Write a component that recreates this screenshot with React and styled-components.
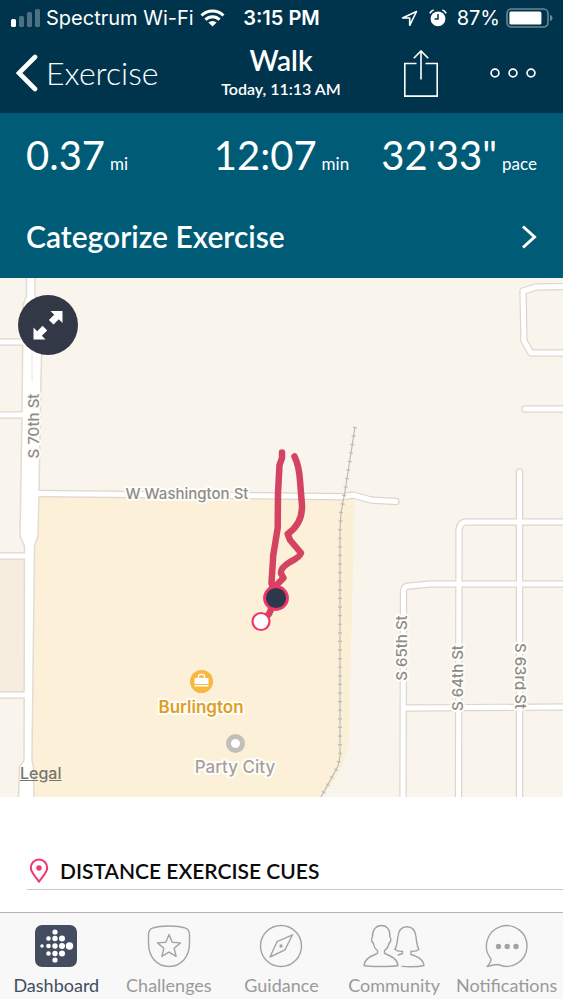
import styled, { createGlobalStyle } from 'styled-components';

const GlobalStyle = createGlobalStyle`
  *, *::before, *::after {
    box-sizing: border-box;
  }
  body {
    margin: 0;
    background: #fff;
    font-family: Lato, 'Liberation Sans', sans-serif;
  }
  button {
    margin: 0;
    padding: 0;
    border: 0;
    background: none;
    color: inherit;
    font: inherit;
    cursor: pointer;
  }
  svg {
    display: block;
    flex: none;
  }
`;

const Page = styled.div`
  display: flex;
  flex-direction: column;
  min-height: 100vh;
`;

const Header = styled.header`
  background: #00344c;
  color: #fff;
`;

const StatusBar = styled.div`
  display: grid;
  grid-template-columns: 1fr auto 1fr;
  align-items: center;
  height: 36px;
  padding: 0 10px;
  font-family: Inter, sans-serif;
  font-size: 20px;
`;

const StatusGroup = styled.div`
  display: flex;
  align-items: center;
  justify-content: ${({ $end }) => ($end ? 'flex-end' : 'flex-start')};
  gap: 6px;
  white-space: nowrap;
`;

const StatusIcons = styled.div`
  display: flex;
  align-items: center;
  gap: 11px;
  margin-right: 4px;
`;

const Clock = styled.time`
  font-weight: 600;
`;

const NavBar = styled.nav`
  display: grid;
  grid-template-columns: 1fr auto 1fr;
  align-items: center;
  height: 77px;
  padding: 0 27px 4px 16px;
`;

const BackButton = styled.button`
  display: flex;
  align-items: center;
  justify-self: start;
  gap: 8px;
  font-size: 32px;
  font-weight: 300;
`;

const TitleBlock = styled.div`
  padding-left: 10px;
  text-align: center;
`;

const Title = styled.h1`
  margin: 0;
  font-size: 28px;
  font-weight: 600;
  line-height: 32px;
`;

const Subtitle = styled.p`
  margin: 0;
  font-size: 16px;
  font-weight: 600;
  line-height: 26px;
`;

const Actions = styled.div`
  display: flex;
  align-items: center;
  justify-content: flex-end;
  gap: 52px;
`;

const Summary = styled.section`
  padding: 18px 26px 24px;
  background: #005b77;
  color: #fff;
`;

const Stats = styled.dl`
  display: grid;
  grid-template-columns: repeat(3, 1fr);
  margin: 0 0 40px;
`;

const Stat = styled.div`
  display: flex;
  flex-direction: row-reverse;
  align-items: baseline;
  justify-content: ${({ $align }) => $align};
  gap: 5px;
  white-space: nowrap;
`;

const Value = styled.dd`
  margin: 0;
  font-size: 40px;
  line-height: 48px;
`;

const Unit = styled.dt`
  font-size: 17px;
`;

const CategorizeButton = styled.button`
  display: flex;
  align-items: center;
  justify-content: space-between;
  width: 100%;
  font-size: 30px;
  font-weight: 600;
  line-height: 35px;
`;

const MapPanel = styled.section`
  position: relative;
`;

const MapDrawing = styled.svg`
  width: 100%;
  height: auto;
`;

const MapLabel = styled.text`
  fill: ${({ $color }) => $color || '#8e8c8b'};
  stroke: #fffdf8;
  stroke-width: 4px;
  stroke-linejoin: round;
  paint-order: stroke;
  font-family: Inter, sans-serif;
  font-size: ${({ $place }) => ($place ? '17px' : '15px')};
  font-weight: ${({ $bold }) => ($bold ? 600 : 500)};
  text-anchor: middle;
`;

const ExpandButton = styled.button`
  position: absolute;
  top: 17px;
  left: 18px;
  display: flex;
  align-items: center;
  justify-content: center;
  width: 60px;
  height: 60px;
  border-radius: 50%;
  background: #323845;
`;

const LegalLink = styled.a`
  position: absolute;
  bottom: 14px;
  left: 20px;
  color: #77756d;
  font-family: Inter, sans-serif;
  font-size: 16px;
  font-weight: 500;
  line-height: 20px;
`;

const Cues = styled.section`
  flex: 1;
  padding: 58px 0 22px 27px;
`;

const CuesTitle = styled.h2`
  display: flex;
  align-items: center;
  gap: 11px;
  margin: 0;
  padding: 0 0 2px 2px;
  border-bottom: 1px solid #c9c9c9;
  color: #0b0b0b;
  font-size: 21px;
  font-weight: 600;
  line-height: 32px;
`;

const TabBar = styled.nav`
  display: grid;
  grid-template-columns: repeat(5, 1fr);
  height: 87px;
  border-top: 1px solid #b5b5b5;
  background: #f8f8f8;
`;

const Tab = styled.a`
  display: flex;
  flex-direction: column;
  align-items: center;
  gap: 4px;
  padding-top: 11px;
  color: ${({ $active }) => ($active ? '#434d5f' : '#9a9a9a')};
  font-size: 18px;
  line-height: 26px;
  text-decoration: none;
  white-space: nowrap;
`;

const SignalIcon = () => (
  <svg width="30" height="18" viewBox="0 0 30 18" fill="#fff">
    <rect x="1" y="10" width="5" height="8" rx="1.5" />
    <g opacity=".3">
      <rect x="9" y="7" width="5" height="11" rx="1.5" />
      <rect x="17" y="3" width="5" height="15" rx="1.5" />
      <rect x="25" y="0" width="5" height="18" rx="1.5" />
    </g>
  </svg>
);

const WifiIcon = () => (
  <svg width="25" height="18" viewBox="0 0 25 18" fill="none">
    <path d="M1.5 6.5a15.6 15.6 0 0 1 22 0" stroke="#fff" strokeWidth="3" />
    <path d="M5.4 10.6a10 10 0 0 1 14.2 0" stroke="#fff" strokeWidth="3" />
    <path d="M12.5 17.6 8.4 13.6a5.8 5.8 0 0 1 8.2 0z" fill="#fff" />
  </svg>
);

const LocationIcon = () => (
  <svg width="17" height="17" viewBox="0 0 17 17" fill="none">
    <path
      d="M15.5 1.5 1.5 8h7.2v7.3z"
      stroke="#fff"
      strokeWidth="1.6"
      strokeLinejoin="round"
    />
  </svg>
);

const AlarmIcon = () => (
  <svg width="18" height="18" viewBox="0 0 18 18">
    <circle cx="9" cy="9.8" r="7.4" fill="#fff" />
    <path
      d="M.9 4.4A6 6 0 0 1 4.6 1M17.1 4.4A6 6 0 0 0 13.4 1"
      fill="none"
      stroke="#fff"
      strokeWidth="1.8"
    />
    <path d="M9 5v5H5.6" fill="none" stroke="#00344c" strokeWidth="1.5" />
  </svg>
);

const BatteryIcon = () => (
  <svg width="47" height="20" viewBox="0 0 47 20">
    <rect
      x="1"
      y="1"
      width="41"
      height="18"
      rx="4.5"
      fill="none"
      stroke="#6b8796"
      strokeWidth="1.6"
    />
    <rect x="3.4" y="3.4" width="32" height="13.2" rx="1.5" fill="#fff" />
    <path d="M44 6.8q2.6 1 2.6 3.2T44 13.2z" fill="#6b8796" />
  </svg>
);

const BackIcon = () => (
  <svg width="22" height="38" viewBox="0 0 22 38" fill="none">
    <path
      d="M19 3 3 19l16 16"
      stroke="#fff"
      strokeWidth="4.6"
      strokeLinecap="round"
    />
  </svg>
);

const ShareIcon = () => (
  <svg width="34" height="48" viewBox="0 0 34 48" fill="none">
    <path
      d="M12.5 14.5H.8v32.6h32.4V14.5H21.5M17 30.5V2M9.8 9.3 17 2l7.2 7.3"
      stroke="#fff"
      strokeWidth="1.6"
    />
  </svg>
);

const MoreIcon = () => (
  <svg width="46" height="12" viewBox="0 0 46 12" fill="none">
    {[5, 23, 41].map((cx) => (
      <circle key={cx} cx={cx} cy="6" r="3.9" stroke="#fff" strokeWidth="1.7" />
    ))}
  </svg>
);

const ExpandIcon = () => (
  <svg width="30" height="30" viewBox="0 0 30 30" fill="#fff">
    <path d="M17.5 1h12v12l-3.7-3.7-5.3 5.3-4.6-4.6L21.2 4.7z" />
    <path d="M12.5 29.5H.5v-12l3.7 3.7 5.4-5.4 4.6 4.6-5.4 5.4z" />
  </svg>
);

const PinIcon = () => (
  <svg width="20" height="26" viewBox="0 0 20 26" fill="none">
    <path
      d="M10 23.8C7 19 1.8 14.6 1.8 9.8a8.2 8.2 0 0 1 16.4 0c0 4.8-5.2 9.2-8.2 14z"
      stroke="#f0386d"
      strokeWidth="2"
      strokeLinejoin="round"
    />
    <circle cx="10" cy="10" r="2.7" fill="#f0386d" />
  </svg>
);

const dots = [
  [8, 22, 1.7],
  [14.5, 14.5, 2.3],
  [14.5, 22, 2.3],
  [14.5, 29.5, 2.3],
  [21, 8, 2.6],
  [21, 14.5, 2.7],
  [21, 22, 2.7],
  [21, 29.5, 2.7],
  [21, 36, 2.6],
  [28, 14.5, 3],
  [28, 22, 3],
  [28, 29.5, 3],
  [35.5, 22, 3.7],
];

const DashboardIcon = () => (
  <svg width="44" height="44" viewBox="0 0 44 44">
    <rect x="1" y="1" width="42" height="42" rx="7" fill="#434d5f" />
    {dots.map(([cx, cy, r]) => (
      <circle key={`${cx}-${cy}`} cx={cx} cy={cy} r={r} fill="#fff" />
    ))}
  </svg>
);

const LineIcon = ({ width = 44, children }) => (
  <svg
    width={width}
    height="44"
    viewBox={`0 0 ${width} 44`}
    fill="none"
    stroke="#a3a3a3"
    strokeWidth="1.4"
    strokeLinejoin="round"
    strokeLinecap="round"
  >
    {children}
  </svg>
);

const ChallengesIcon = () => (
  <LineIcon>
    <path d="M22 2C15.5 2 9.5 2.7 5.5 4.2 2.5 5.3 1.5 7.5 1.5 11v8C1.5 33 10 42.5 22 42.5S42.5 33 42.5 19v-8c0-3.5-1-5.7-4-6.8C34.500 2.7 28.5 2 22 2z" />
    <path d="m22 10.5 3.2 7.7 8.3.7-6.300 5.400 1.900 8.100-7.100-4.300-7.100 4.300 1.900-8.100-6.300-5.400 8.300-.7z" />
  </LineIcon>
);

const GuidanceIcon = () => (
  <LineIcon>
    <circle cx="22" cy="22" r="20.5" />
    <path d="M33.5 10.8 18 17.7 11 33l15-7.2z" />
    <circle cx="22" cy="22" r="1" fill="#a3a3a3" />
  </LineIcon>
);

const CommunityIcon = () => (
  <LineIcon width={62}>
    <path d="M14.5 26.5v2.8C9 32 2 33.8 1 41.5c5 1.3 29 1.3 34 0-1-7.7-8-9.5-13.5-12.2v-2.8c2.6-1.6 4-4.5 4.6-7.5 2-.8 2.3-5 .8-6C27.5 6 24 1.5 18.5 1.500S9 6 9.500 13c-1.500 1-1.200 5.200.8 6 .5 3 1.800 5.900 4.200 7.500z" />
    <path d="M39 42.4c7 .5 17 .3 22-.9-1.200-7-7-9-13-11v-3.200c3.600.3 6.400-.5 8-2-2.200-3-2.400-7.300-2.900-12C52.400 6.500 49.500 2.700 44 2.700S35.400 6.500 34.800 13.300c-.5 4.700-.8 9-3 12 1.700 1.500 4.400 2.300 7.700 2v2.200L35.300 31" />
  </LineIcon>
);

const NotificationsIcon = () => (
  <LineIcon>
    <path d="M2.2 42.5c3-3.4 4-5.700 3.700-7.800a20.300 20.300 0 1 1 7.500 5.800C9.500 40.500 6 41.300 2.200 42.500z" />
    <g fill="#a3a3a3">
      <circle cx="13.5" cy="22.5" r="2" />
      <circle cx="22.2" cy="22.5" r="2" />
      <circle cx="31" cy="22.5" r="2" />
    </g>
  </LineIcon>
);

const roads = [
  'M-5 64H25',
  'M-5 137H23',
  'M-5 278H27',
  'M-5 417H26',
  'M36 215.5 281 218l62 .7 10-1.700 18 5 25 1.500',
  'M570 8.5 536 9l-13 4 1 50 7 12h39',
  'M525 131h45',
  'M519.5 194V525',
  'M570 244H466q-6 0-7 8L458.500 525',
  'M570 306H430L409 308q-5 0-5.500 5L403 525',
  'M405 430 570 429',
];

const rail = 'M355 149 345 213l-4 22-1 18V478l-2 10-17 31';

const StreetMap = () => (
  <MapDrawing viewBox="0 0 563 519" role="img" aria-label="Walk route">
    <rect width="563" height="519" fill="#f9f4ec" />
    <path d="M0 280H26V415H0z" fill="#f6eddf" />
    <path
      d="M35 218 354 220 353 290 350 400 349 460Q347 488 322 519H30z"
      fill="#fcf1d8"
    />
    <path
      d="M340 253 343 222 354 220 353 290 350 400 349 460Q347 488 322 519L338 488 340 478z"
      fill="#fbefd6"
    />
    <g fill="none" strokeLinecap="round" strokeLinejoin="round">
      {roads.map((d) => (
        <path key={d} d={d} stroke="#ddd6cc" strokeWidth="7.4" />
      ))}
      <path
        d="M26.5-2V18L23 27 22 140 20 258 24.5 268 24 482 19.5 489 18.5 521H34L33.5 489 32 482 34.5 268 38 258 39 215 41 100 42 60 42 27 35 18V-2z"
        fill="#fff"
        stroke="#e2dcd3"
        strokeWidth="1.5"
      />
      {roads.map((d) => (
        <path key={d} d={d} stroke="#fff" strokeWidth="5" />
      ))}
      <path d="M32 76V103" stroke="#ece6de" strokeWidth="1" />
    </g>
    <g fill="none">
      <path d={rail} stroke="#bdbbb8" strokeWidth="1.2" />
      <path
        d={rail}
        stroke="#bdbbb8"
        strokeWidth="4"
        strokeDasharray="1.2 7.4"
      />
    </g>
    <g
      fill="none"
      stroke="#d44462"
      strokeWidth="6.5"
      strokeLinecap="round"
      strokeLinejoin="round"
    >
      <path d="M282 174.5V180l-2.500 7L278 215l-.3 35-4.400 27-1.800 28 3 12" />
      <path d="M294.5 178.5q4.500 9 5.500 24l2 25q.5 18-14.300 28.500l2.300 6 11 13q-1 4-11 9-10 6-9 11.500l2.500 4.500-8 8" />
      <path d="M276 320 269 336 263 342" />
    </g>
    <circle cx="276" cy="320" r="11.5" fill="#2d394a" stroke="#f0356b" strokeWidth="2.8" />
    <circle cx="261" cy="343.5" r="8.5" fill="#fff" stroke="#f0356b" strokeWidth="2.2" />

    <MapLabel transform="translate(39 148) rotate(-90)">S 70th St</MapLabel>
    <MapLabel x="187" y="221">W Washington St</MapLabel>
    <MapLabel transform="translate(407 370) rotate(-90)">S 65th St</MapLabel>
    <MapLabel transform="translate(463 400) rotate(-90)">S 64th St</MapLabel>
    <MapLabel transform="translate(515 398) rotate(90)">S 63rd St</MapLabel>

    <circle cx="201.5" cy="403.5" r="11.5" fill="#f8b840" />
    <path d="M194.5 400h14v6h-14zM194.5 407h14v1.600h-14z" fill="#fff" />
    <path
      d="M198.5 400v-1.500q0-2 2-2h2q2 0 2 2v1.500"
      fill="none"
      stroke="#fff"
      strokeWidth="1.3"
    />
    <MapLabel $place $bold $color="#df9e23" x="201" y="435">
      Burlington
    </MapLabel>
    <circle cx="235.5" cy="465.5" r="7" fill="#fff" stroke="#c2beb9" strokeWidth="5" />
    <MapLabel $place $color="#a5a19c" x="235" y="495">
      Party City
    </MapLabel>
  </MapDrawing>
);

const stats = [
  { value: '0.37', unit: 'mi', align: 'flex-end' },
  { value: '12:07', unit: 'min', align: 'center' },
  { value: '32\'33"', unit: 'pace', align: 'flex-start' },
];

const tabs = [
  { label: 'Dashboard', Icon: DashboardIcon, active: true },
  { label: 'Challenges', Icon: ChallengesIcon },
  { label: 'Guidance', Icon: GuidanceIcon },
  { label: 'Community', Icon: CommunityIcon },
  { label: 'Notifications', Icon: NotificationsIcon },
];

const App = () => (
  <Page>
    <GlobalStyle />
    <Header>
      <StatusBar>
        <StatusGroup>
          <SignalIcon />
          <span>Spectrum Wi-Fi</span>
          <WifiIcon />
        </StatusGroup>
        <Clock>3:15 PM</Clock>
        <StatusGroup $end>
          <StatusIcons>
            <LocationIcon />
            <AlarmIcon />
          </StatusIcons>
          <span>87%</span>
          <BatteryIcon />
        </StatusGroup>
      </StatusBar>
      <NavBar>
        <BackButton type="button">
          <BackIcon />
          Exercise
        </BackButton>
        <TitleBlock>
          <Title>Walk</Title>
          <Subtitle>Today, 11:13 AM</Subtitle>
        </TitleBlock>
        <Actions>
          <button type="button" aria-label="Share">
            <ShareIcon />
          </button>
          <button type="button" aria-label="More">
            <MoreIcon />
          </button>
        </Actions>
      </NavBar>
    </Header>
    <Summary>
      <Stats>
        {stats.map(({ value, unit, align }) => (
          <Stat key={unit} $align={align}>
            <Unit>{unit}</Unit>
            <Value>{value}</Value>
          </Stat>
        ))}
      </Stats>
      <CategorizeButton type="button">
        Categorize Exercise
        <svg width="16" height="24" viewBox="0 0 16 24" fill="none">
          <path d="M2 1.5 13.5 12 2 22.5" stroke="#fff" strokeWidth="3" />
        </svg>
      </CategorizeButton>
    </Summary>
    <MapPanel>
      <StreetMap />
      <ExpandButton type="button" aria-label="Expand map">
        <ExpandIcon />
      </ExpandButton>
      <LegalLink href="#legal">Legal</LegalLink>
    </MapPanel>
    <Cues>
      <CuesTitle>
        <PinIcon />
        DISTANCE EXERCISE CUES
      </CuesTitle>
    </Cues>
    <TabBar>
      {tabs.map(({ label, Icon, active }) => (
        <Tab key={label} href={`#${label.toLowerCase()}`} $active={active}>
          <Icon />
          {label}
        </Tab>
      ))}
    </TabBar>
  </Page>
);

export default App;
